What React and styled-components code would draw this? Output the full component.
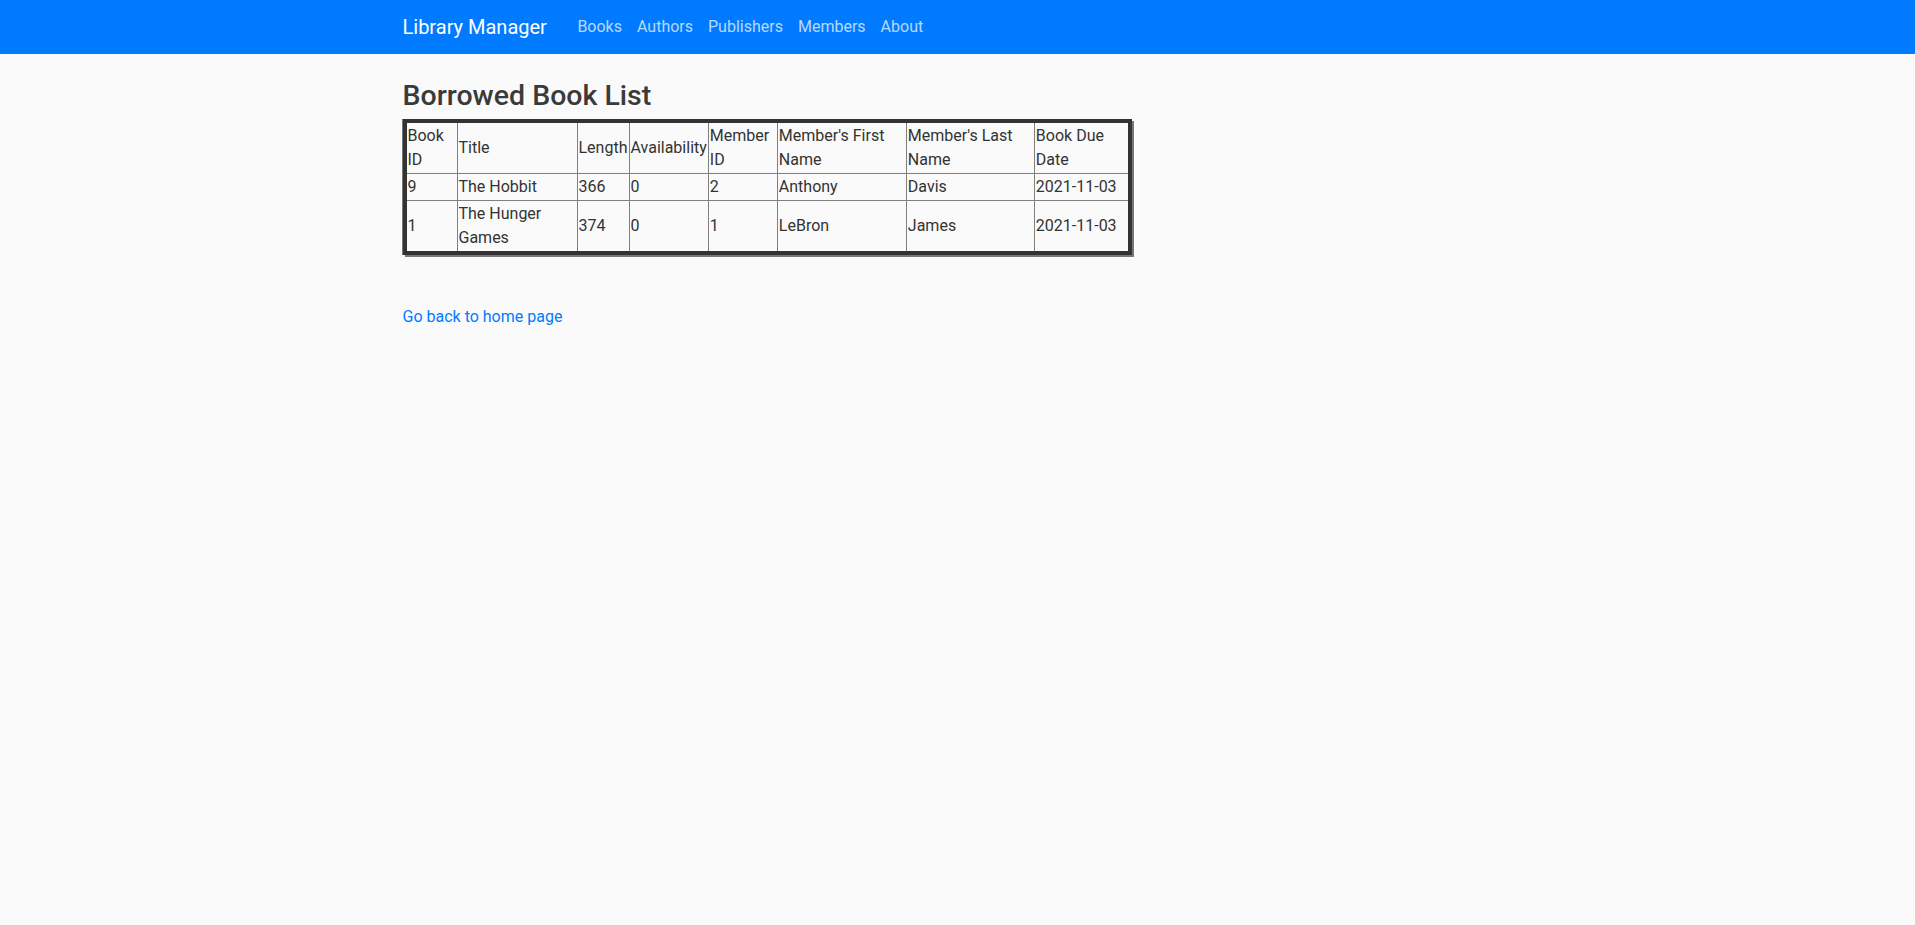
import React from 'react';
import styled, { createGlobalStyle } from 'styled-components';

const GlobalStyle = createGlobalStyle`
  body {
    margin: 0;
    background: #fafafa;
    color: #333;
    font-family: Roboto, "Open Sans", "Liberation Sans", sans-serif;
    font-size: 16px;
    line-height: 1.5;
  }
`;

const Navbar = styled.nav`
  background: #007bff;
  height: 54px;
`;

const NavInner = styled.div`
  max-width: 1110px;
  margin: 0 auto;
  height: 100%;
  display: flex;
  align-items: center;
`;

const Brand = styled.a`
  color: #fff;
  font-size: 20px;
  margin-right: 23px;
  text-decoration: none;
`;

const NavLink = styled.a`
  color: rgba(255, 255, 255, 0.72);
  padding: 0 7.5px;
  font-size: 16px;
  text-decoration: none;
`;

const Container = styled.main`
  max-width: 1110px;
  margin: 0 auto;
  padding-top: 25px;
`;

const Heading = styled.h2`
  margin: 0 0 6px;
  font-size: 28.5px;
  font-weight: 500;
  line-height: 1.2;
  color: #3a3a3a;
`;

const Table = styled.table`
  border-collapse: collapse;
  table-layout: fixed;
  border: 4px solid #333;
  box-shadow: 2px 2px 0 #777, -1px 0 0 #777;
`;

const Cell = styled.td`
  border: 1px solid #808080;
  padding: 1px;
  vertical-align: middle;
  text-align: left;
  font-weight: 400;
  width: ${(p) => p.w}px;
`;

const BackLink = styled.a`
  display: inline-block;
  margin-top: 50px;
  color: #007bff;
  text-decoration: none;
`;

const columns = [
  { label: 'Book ID', w: 48 },
  { label: 'Title', w: 117 },
  { label: 'Length', w: 49 },
  { label: 'Availability', w: 76 },
  { label: 'Member ID', w: 66 },
  { label: "Member's First Name", w: 126 },
  { label: "Member's Last Name", w: 125 },
  { label: 'Book Due Date', w: 91 },
];

const rows = [
  ['9', 'The Hobbit', '366', '0', '2', 'Anthony', 'Davis', '2021-11-03'],
  ['1', 'The Hunger Games', '374', '0', '1', 'LeBron', 'James', '2021-11-03'],
];

export default function App() {
  return (
    <>
      <GlobalStyle />
      <Navbar>
        <NavInner>
          <Brand href="#">Library Manager</Brand>
          <NavLink href="#">Books</NavLink>
          <NavLink href="#">Authors</NavLink>
          <NavLink href="#">Publishers</NavLink>
          <NavLink href="#">Members</NavLink>
          <NavLink href="#">About</NavLink>
        </NavInner>
      </Navbar>
      <Container>
        <Heading>Borrowed Book List</Heading>
        <Table>
          <thead>
            <tr>
              {columns.map((c) => (
                <Cell as="th" key={c.label} w={c.w}>{c.label}</Cell>
              ))}
            </tr>
          </thead>
          <tbody>
            {rows.map((r, i) => (
              <tr key={i}>
                {r.map((v, j) => (
                  <Cell key={j}>{v}</Cell>
                ))}
              </tr>
            ))}
          </tbody>
        </Table>
        <BackLink href="#">Go back to home page</BackLink>
      </Container>
    </>
  );
}
